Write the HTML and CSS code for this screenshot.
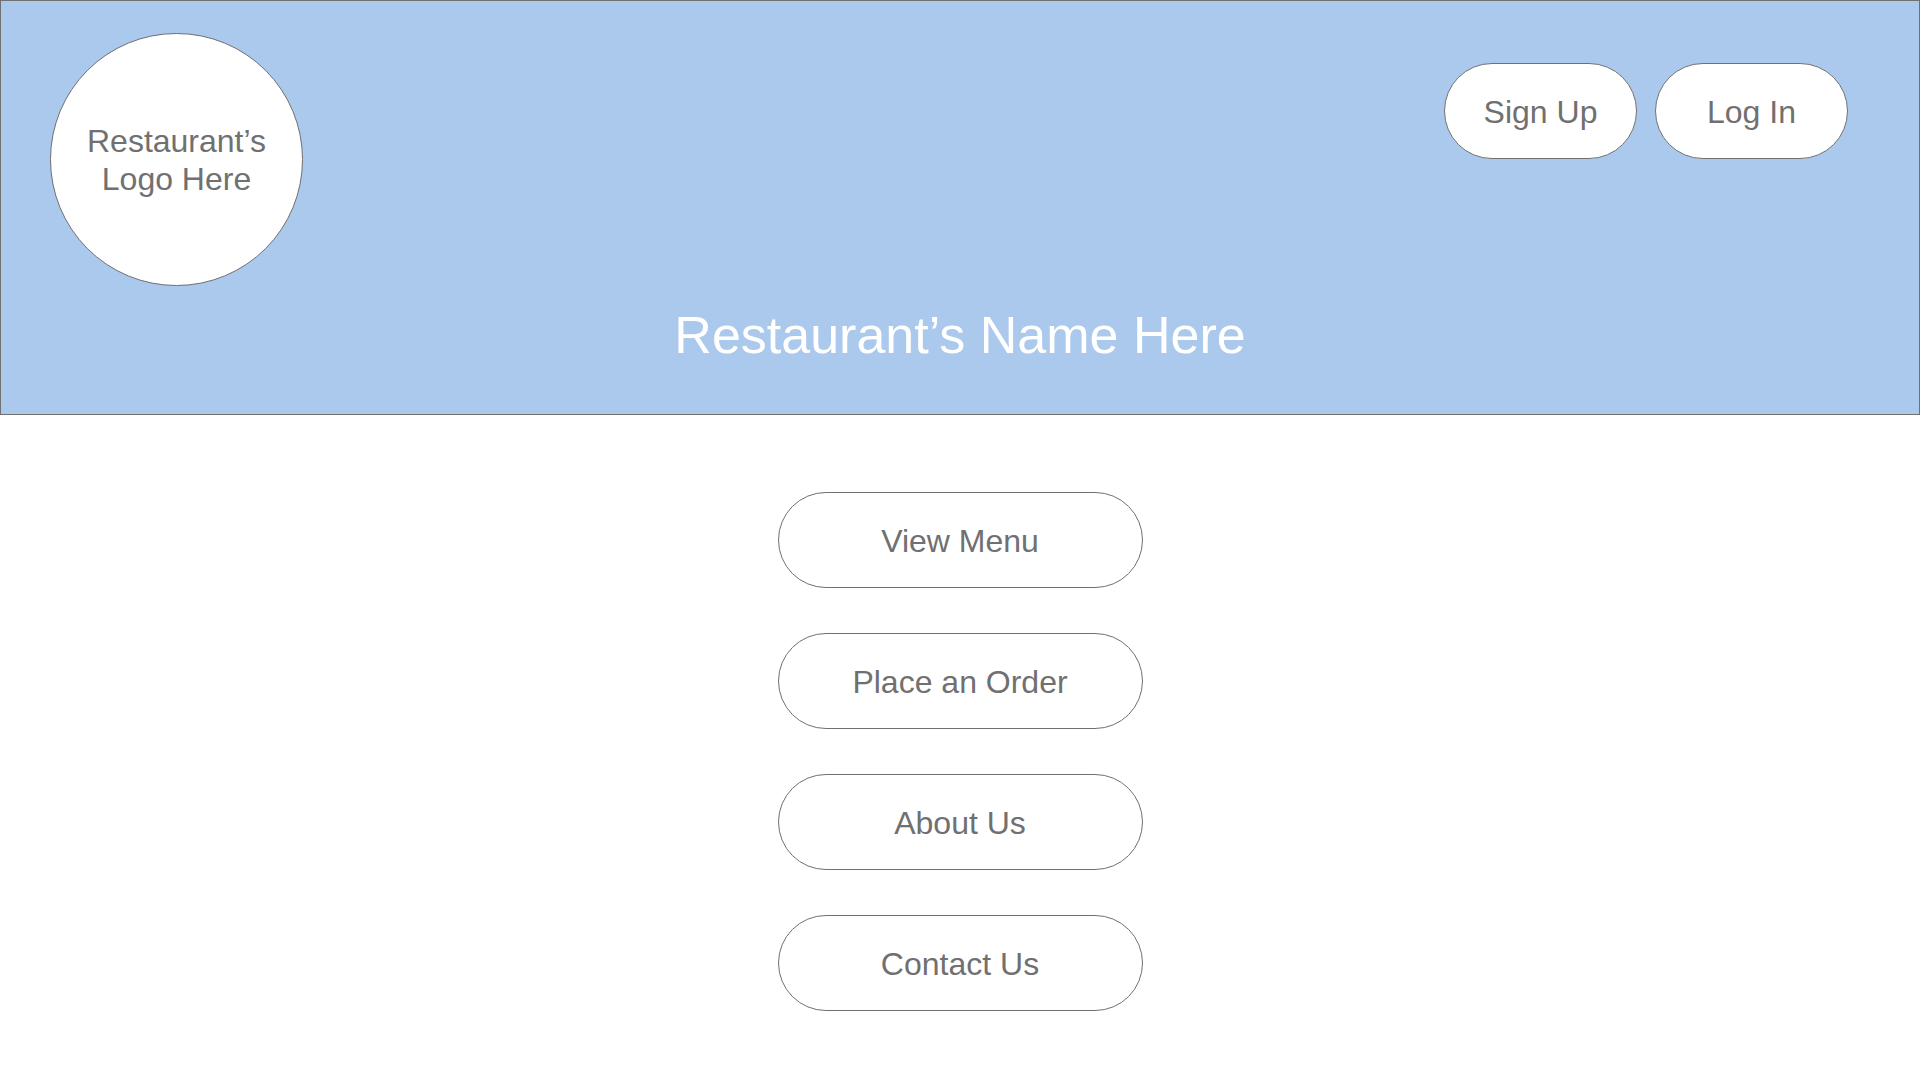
FILE: index.html
```
<!DOCTYPE html>
<html lang="en">
<head>
<meta charset="utf-8">
<meta name="viewport" content="width=device-width, initial-scale=1">
<title>Restaurant’s Name Here</title>
<link rel="stylesheet" href="styles.css">
</head>
<body>
<header class="banner">
  <div class="top">
    <div class="logo">Restaurant’s<br>Logo Here</div>
    <div class="account">
      <button class="pill" type="button">Sign Up</button>
      <button class="pill" type="button">Log In</button>
    </div>
  </div>
  <h1 class="name">Restaurant’s Name Here</h1>
</header>
<main class="actions">
  <button class="pill wide" type="button">View Menu</button>
  <button class="pill wide" type="button">Place an Order</button>
  <button class="pill wide" type="button">About Us</button>
  <button class="pill wide" type="button">Contact Us</button>
</main>
</body>
</html>
```
FILE: styles.css
```
* {
  box-sizing: border-box;
}

body {
  margin: 0;
  background: #fff;
  color: #707070;
  font-family: "Liberation Sans", Arial, sans-serif;
  font-size: 32px;
  line-height: 38px;
}

.banner {
  padding: 32px 0 48px;
  border: 1px solid #707070;
  background: #abc8ed;
}

.top {
  display: flex;
  flex-wrap: wrap;
  justify-content: space-between;
  align-items: flex-start;
  padding: 0 71px 0 49px;
}

.logo {
  display: flex;
  align-items: center;
  justify-content: center;
  width: 253px;
  height: 253px;
  border: 1px solid #707070;
  border-radius: 50%;
  background: #fff;
  text-align: center;
}

.account {
  display: flex;
  gap: 18px;
  padding-top: 30px;
}

.pill {
  width: 193px;
  height: 96px;
  padding: 2px 0 0;
  border: 1px solid #707070;
  border-radius: 48px;
  background: #fff;
  color: inherit;
  font: inherit;
  cursor: pointer;
}

.wide {
  width: 365px;
}

.name {
  margin: 18px 0 0;
  color: #fff;
  font-size: 52px;
  font-weight: 400;
  line-height: 62px;
  text-align: center;
}

.actions {
  display: flex;
  flex-direction: column;
  align-items: center;
  gap: 45px;
  padding: 77px 0 68px;
}
```
